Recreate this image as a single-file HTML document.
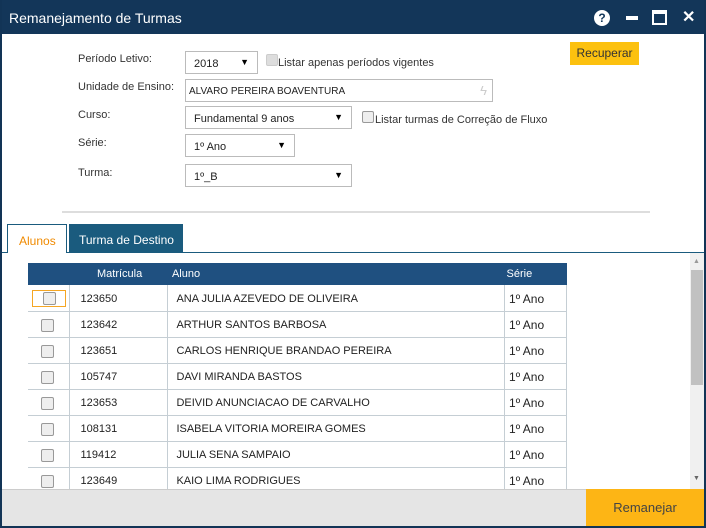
<!DOCTYPE html>
<html><head><style>
*{box-sizing:border-box;margin:0;padding:0}
body{width:706px;height:528px;overflow:hidden;font-family:"Liberation Sans",sans-serif;background:#fff;position:relative}
.frame{position:absolute;left:0;top:0;width:706px;height:528px;border:2px solid #123456;border-top:0}
.title{position:absolute;left:0;top:0;width:706px;height:34px;background:#133659;color:#fff;font-size:14px;padding:10px 0 0 9px}
.a{position:absolute}
.lbl{position:absolute;left:78px;font-size:11px;color:#333}
.sel{position:absolute;border:1px solid #bbb;background:#fff;font-size:11px;color:#222;padding:6px 0 0 8px}
.sel b{position:absolute;right:8px;top:5px;font-size:9px;color:#000}
.chk{position:absolute;width:12px;height:12px;border:1px solid #999;border-radius:2px;background:#eee}
table{position:absolute;left:28px;top:263px;width:539px;border-collapse:collapse;font-size:11px;color:#222}
th{background:#1f5080;color:#fff;font-weight:normal;height:22px;text-align:left;font-size:11px}
td{height:26px;border:1px solid #c5ced4;border-top:0;padding-top:2px}
td.c{border-left:0}
</style></head><body>
<div class="title">Remanejamento de Turmas</div>
<div class="a" style="left:594px;top:10px;width:16px;height:16px;border-radius:50%;background:#fff;color:#133659;font-size:12px;font-weight:bold;text-align:center;line-height:16px">?</div>
<div class="a" style="left:626px;top:16px;width:12px;height:4px;background:#fff"></div>
<div class="a" style="left:652px;top:10px;width:15px;height:15px;border:2px solid #fff;border-top-width:4px"></div>
<div class="a" style="left:682px;top:7px;color:#fff;font-size:16px;font-weight:bold">✕</div>
<div class="frame"></div>

<div class="lbl" style="top:53px">Período Letivo:</div>
<div class="sel" style="left:185px;top:51px;width:73px;height:23px">2018<b>▼</b></div>
<div class="chk" style="left:266px;top:54px;background:#ddd;border-color:#ccc"></div>
<div class="a" style="left:278px;top:57px;font-size:11px;color:#333">Listar apenas períodos vigentes</div>
<div class="a" style="left:570px;top:42px;width:69px;height:23px;background:#fcc10f;font-size:12px;color:#333;text-align:center;line-height:23px">Recuperar</div>

<div class="lbl" style="top:81px">Unidade de Ensino:</div>
<div class="sel" style="left:185px;top:79px;width:308px;height:23px;padding-left:3px;font-size:10px">ALVARO PEREIRA BOAVENTURA<span style="position:absolute;right:5px;top:3px;color:#ccc;font-size:13px">ϟ</span></div>

<div class="lbl" style="top:109px">Curso:</div>
<div class="sel" style="left:185px;top:106px;width:167px;height:23px">Fundamental 9 anos<b>▼</b></div>
<div class="chk" style="left:362px;top:111px"></div>
<div class="a" style="left:375px;top:114px;font-size:11px;color:#333">Listar turmas de Correção de Fluxo</div>

<div class="lbl" style="top:137px">Série:</div>
<div class="sel" style="left:185px;top:134px;width:110px;height:23px">1º Ano<b>▼</b></div>
<div class="lbl" style="top:167px">Turma:</div>
<div class="sel" style="left:185px;top:164px;width:167px;height:23px">1º_B<b>▼</b></div>

<div class="a" style="left:62px;top:211px;width:588px;height:2px;background:#ddd"></div>

<div class="a" style="left:7px;top:224px;width:60px;height:29px;border:1px solid #1a5b7e;border-bottom:0;background:#fff;color:#f08a00;font-size:12px;padding:9px 0 0 11px;z-index:2">Alunos</div>
<div class="a" style="left:69px;top:224px;width:114px;height:28px;background:#1a5b7e;color:#fff;font-size:12px;padding:9px 0 0 10px">Turma de Destino</div>
<div class="a" style="left:2px;top:252px;width:702px;height:1px;background:#1a5b7e"></div>

<table>
<tr><th style="width:42px"></th><th style="width:98px;padding-left:27px">Matrícula</th><th style="width:337px;padding-left:4px">Aluno</th><th style="width:62px;padding-left:2px">Série</th></tr>
<tr><td class="c"><div style="margin-left:4px;width:34px;height:17px;border:1px solid #f5a623;position:relative"><div class="chk" style="left:10px;top:1px;width:13px;height:13px"></div></div></td><td style="padding-left:10px">123650</td><td style="padding-left:8px">ANA JULIA AZEVEDO DE OLIVEIRA</td><td style="padding-left:4px;font-size:12px">1º Ano</td></tr>
<tr><td class="c"><div class="chk" style="position:relative;margin-left:13px;width:13px;height:13px"></div></td><td style="padding-left:10px">123642</td><td style="padding-left:8px">ARTHUR SANTOS BARBOSA</td><td style="padding-left:4px;font-size:12px">1º Ano</td></tr>
<tr><td class="c"><div class="chk" style="position:relative;margin-left:13px;width:13px;height:13px"></div></td><td style="padding-left:10px">123651</td><td style="padding-left:8px">CARLOS HENRIQUE BRANDAO PEREIRA</td><td style="padding-left:4px;font-size:12px">1º Ano</td></tr>
<tr><td class="c"><div class="chk" style="position:relative;margin-left:13px;width:13px;height:13px"></div></td><td style="padding-left:10px">105747</td><td style="padding-left:8px">DAVI MIRANDA BASTOS</td><td style="padding-left:4px;font-size:12px">1º Ano</td></tr>
<tr><td class="c"><div class="chk" style="position:relative;margin-left:13px;width:13px;height:13px"></div></td><td style="padding-left:10px">123653</td><td style="padding-left:8px">DEIVID ANUNCIACAO DE CARVALHO</td><td style="padding-left:4px;font-size:12px">1º Ano</td></tr>
<tr><td class="c"><div class="chk" style="position:relative;margin-left:13px;width:13px;height:13px"></div></td><td style="padding-left:10px">108131</td><td style="padding-left:8px">ISABELA VITORIA MOREIRA GOMES</td><td style="padding-left:4px;font-size:12px">1º Ano</td></tr>
<tr><td class="c"><div class="chk" style="position:relative;margin-left:13px;width:13px;height:13px"></div></td><td style="padding-left:10px">119412</td><td style="padding-left:8px">JULIA SENA SAMPAIO</td><td style="padding-left:4px;font-size:12px">1º Ano</td></tr>
<tr><td class="c"><div class="chk" style="position:relative;margin-left:13px;width:13px;height:13px"></div></td><td style="padding-left:10px">123649</td><td style="padding-left:8px">KAIO LIMA RODRIGUES</td><td style="padding-left:4px;font-size:12px">1º Ano</td></tr>
</table>

<div class="a" style="left:690px;top:253px;width:14px;height:236px;background:#f0f0f0"></div>
<div class="a" style="left:691px;top:270px;width:12px;height:115px;background:#c1c1c1"></div>
<div class="a" style="left:693px;top:258px;font-size:7px;color:#999">▲</div>
<div class="a" style="left:693px;top:475px;font-size:7px;color:#666">▼</div>

<div class="a" style="left:2px;top:489px;width:702px;height:37px;background:#e5e5e5;border-top:1px solid #ccc"></div>
<div class="a" style="left:586px;top:489px;width:118px;height:37px;background:#fdb515;color:#444;font-size:13px;text-align:center;line-height:38px">Remanejar</div>
</body></html>
